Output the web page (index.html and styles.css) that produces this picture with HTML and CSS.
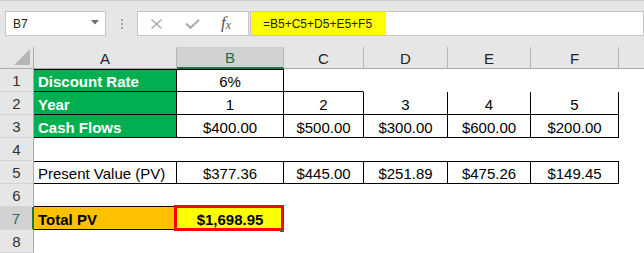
FILE: index.html
```html
<!DOCTYPE html>
<html>
<head>
<meta charset="utf-8">
<link rel="stylesheet" href="styles.css">
</head>
<body>
<div class="app">
  <div class="toolbar">
    <div class="namebox">
      <span>B7</span>
      <svg class="caret" width="8" height="5" viewBox="0 0 8 5"><path d="M0 0H8L4 4.5Z" fill="#6d6d6d"/></svg>
    </div>
    <div class="dots"><i></i><i></i><i></i></div>
    <div class="fxbox">
      <svg class="ico-x" width="11" height="10" viewBox="0 0 11 10"><path d="M0.5 0.5L10.5 9.5M10.5 0.5L0.5 9.5" stroke="#a6a6a6" stroke-width="1.3" fill="none"/></svg>
      <svg class="ico-ok" width="15" height="10" viewBox="0 0 15 10"><path d="M1 4.5L5.5 8.8L14 0.8" stroke="#a9a9a9" stroke-width="2" fill="none"/></svg>
      <span class="fx">f<sub>x</sub></span>
    </div>
    <div class="formula"><span class="ftext">=B5+C5+D5+E5+F5</span></div>
  </div>

  <div class="sheet">
    <div class="corner"><svg width="16" height="16" viewBox="0 0 16 16"><path d="M16 0V16H0Z" fill="#b7b7b7"/></svg></div>
    <div class="h">A</div>
    <div class="h hsel">B</div>
    <div class="h">C</div>
    <div class="h">D</div>
    <div class="h">E</div>
    <div class="h">F</div>
    <div class="h hlast"></div>

    <div class="rh">1</div>
    <div class="c g b k kt">Discount Rate</div>
    <div class="c ctr k kt">6%</div>
    <div class="c kb"></div>
    <div class="c"></div>
    <div class="c"></div>
    <div class="c"></div>
    <div class="c"></div>

    <div class="rh">2</div>
    <div class="c g b k">Year</div>
    <div class="c ctr k">1</div>
    <div class="c ctr k">2</div>
    <div class="c ctr k">3</div>
    <div class="c ctr k">4</div>
    <div class="c ctr k">5</div>
    <div class="c"></div>

    <div class="rh">3</div>
    <div class="c g b k">Cash Flows</div>
    <div class="c ctr k">$400.00</div>
    <div class="c ctr k">$500.00</div>
    <div class="c ctr k">$300.00</div>
    <div class="c ctr k">$600.00</div>
    <div class="c ctr k">$200.00</div>
    <div class="c"></div>

    <div class="rh">4</div>
    <div class="c"></div>
    <div class="c"></div>
    <div class="c"></div>
    <div class="c"></div>
    <div class="c"></div>
    <div class="c"></div>
    <div class="c"></div>

    <div class="rh">5</div>
    <div class="c k kt">Present Value (PV)</div>
    <div class="c ctr k kt">$377.36</div>
    <div class="c ctr k kt">$445.00</div>
    <div class="c ctr k kt">$251.89</div>
    <div class="c ctr k kt">$475.26</div>
    <div class="c ctr k kt">$149.45</div>
    <div class="c"></div>

    <div class="rh">6</div>
    <div class="c kb"></div>
    <div class="c"></div>
    <div class="c"></div>
    <div class="c"></div>
    <div class="c"></div>
    <div class="c"></div>
    <div class="c"></div>

    <div class="rh rsel">7</div>
    <div class="c o b kb">Total PV</div>
    <div class="c ctr b sel">$1,698.95<span class="handle"></span></div>
    <div class="c"></div>
    <div class="c"></div>
    <div class="c"></div>
    <div class="c"></div>
    <div class="c"></div>

    <div class="rh">8</div>
    <div class="c"></div>
    <div class="c"></div>
    <div class="c"></div>
    <div class="c"></div>
    <div class="c"></div>
    <div class="c"></div>
    <div class="c"></div>
  </div>
</div>
</body>
</html>
```

FILE: styles.css
```css
* { box-sizing: border-box; }
html, body { margin: 0; padding: 0; background: #fff; }
body { width: 644px; height: 253px; overflow: hidden; font-family: "Liberation Sans", Arial, sans-serif; }

.app { width: 644px; }

.toolbar {
  display: flex;
  align-items: flex-start;
  height: 47px;
  padding-top: 10px;
  background: #e6e6e6;
  border-top: 1px solid #cfcfcf;
}
.namebox {
  margin-left: 5px;
  width: 101px;
  height: 25px;
  background: #fff;
  border: 1px solid #c6c6c6;
  display: flex;
  align-items: center;
  justify-content: space-between;
  padding: 0 6px 0 7px;
  font-size: 12px;
  color: #222;
}
.caret { margin-top: -2px; }
.dots {
  width: 31px;
  height: 25px;
  display: flex;
  flex-direction: column;
  align-items: center;
  justify-content: center;
  gap: 2px;
  padding-top: 1px;
}
.dots i { display: block; width: 2px; height: 2px; background: #a8a8a8; }
.fxbox {
  width: 112px;
  height: 25px;
  background: #fff;
  border: 1px solid #c6c6c6;
  display: flex;
  align-items: center;
  padding-left: 13px;
}
.ico-x { margin-top: 1px; }
.ico-ok { margin-left: 23px; margin-top: 1px; }
.fx {
  margin-left: 21px;
  font-family: "Liberation Serif", "Times New Roman", serif;
  font-style: italic;
  font-size: 17px;
  color: #555;
  line-height: 1;
  margin-top: -3px;
}
.fx sub { font-size: 12px; vertical-align: -1px; margin-left: 0; }
.formula {
  flex: 1;
  height: 25px;
  margin-left: 1px;
  background: #fff;
  border: 1px solid #c6c6c6;
  display: flex;
}
.ftext {
  background: #ffff00;
  height: 23px;
  display: flex;
  align-items: center;
  padding: 1px 14px 0 12px;
  font-size: 12px;
  color: #222;
}

.sheet {
  display: grid;
  grid-template-columns: 34px 143px 107px 80px 84px 83px 88px 1fr;
  grid-template-rows: 22px repeat(8, 23px);
  font-size: 15px;
}
.corner {
  background: #e6e6e6;
  border-right: 1px solid #ababab;
  border-bottom: 1px solid #ababab;
  display: flex;
  align-items: flex-end;
  justify-content: flex-end;
  padding: 0 3px 3px 0;
}
.h {
  background: #e6e6e6;
  border-right: 1px solid #b4b4b4;
  border-bottom: 1px solid #ababab;
  display: flex;
  align-items: center;
  justify-content: center;
  color: #222;
  font-size: 15px;
  padding-top: 1px;
}
.hlast { border-right: none; }
.hsel {
  background: #d2d2d2;
  color: #1f6b45;
  border-bottom: 2px solid #217346;
}
.rh {
  background: #e6e6e6;
  border-right: 1px solid #ababab;
  border-bottom: 1px solid #d4d4d4;
  display: flex;
  align-items: flex-end;
  justify-content: center;
  padding-bottom: 2px;
  color: #333;
  font-size: 15px;
}
.rsel {
  background: #d2d2d2;
  color: #2c6e4c;
  border-right: 2px solid #217346;
}

.c {
  border-right: 1px solid transparent;
  border-bottom: 1px solid transparent;
  display: flex;
  align-items: flex-end;
  padding: 0 3px 1px 4px;
  white-space: nowrap;
  color: #000;
  position: relative;
}
.ctr { justify-content: center; padding-left: 0; padding-right: 0; }
.b { font-weight: bold; }
.g { background: #00b050; color: #fff; }
.o { background: #ffc000; }
.k { border-right-color: #000; border-bottom-color: #000; }
.kt { border-top: 1px solid #000; }
.kb { border-bottom-color: #000; }

.sel { background: #ffff00; }
.sel::after {
  content: "";
  position: absolute;
  top: -2px;
  left: -3px;
  right: -1px;
  bottom: -2px;
  border: 3px solid #ff0000;
}
.handle {
  position: absolute;
  right: -1px;
  bottom: -3px;
  width: 4px;
  height: 3px;
  background: #217346;
  z-index: 2;
}
```
